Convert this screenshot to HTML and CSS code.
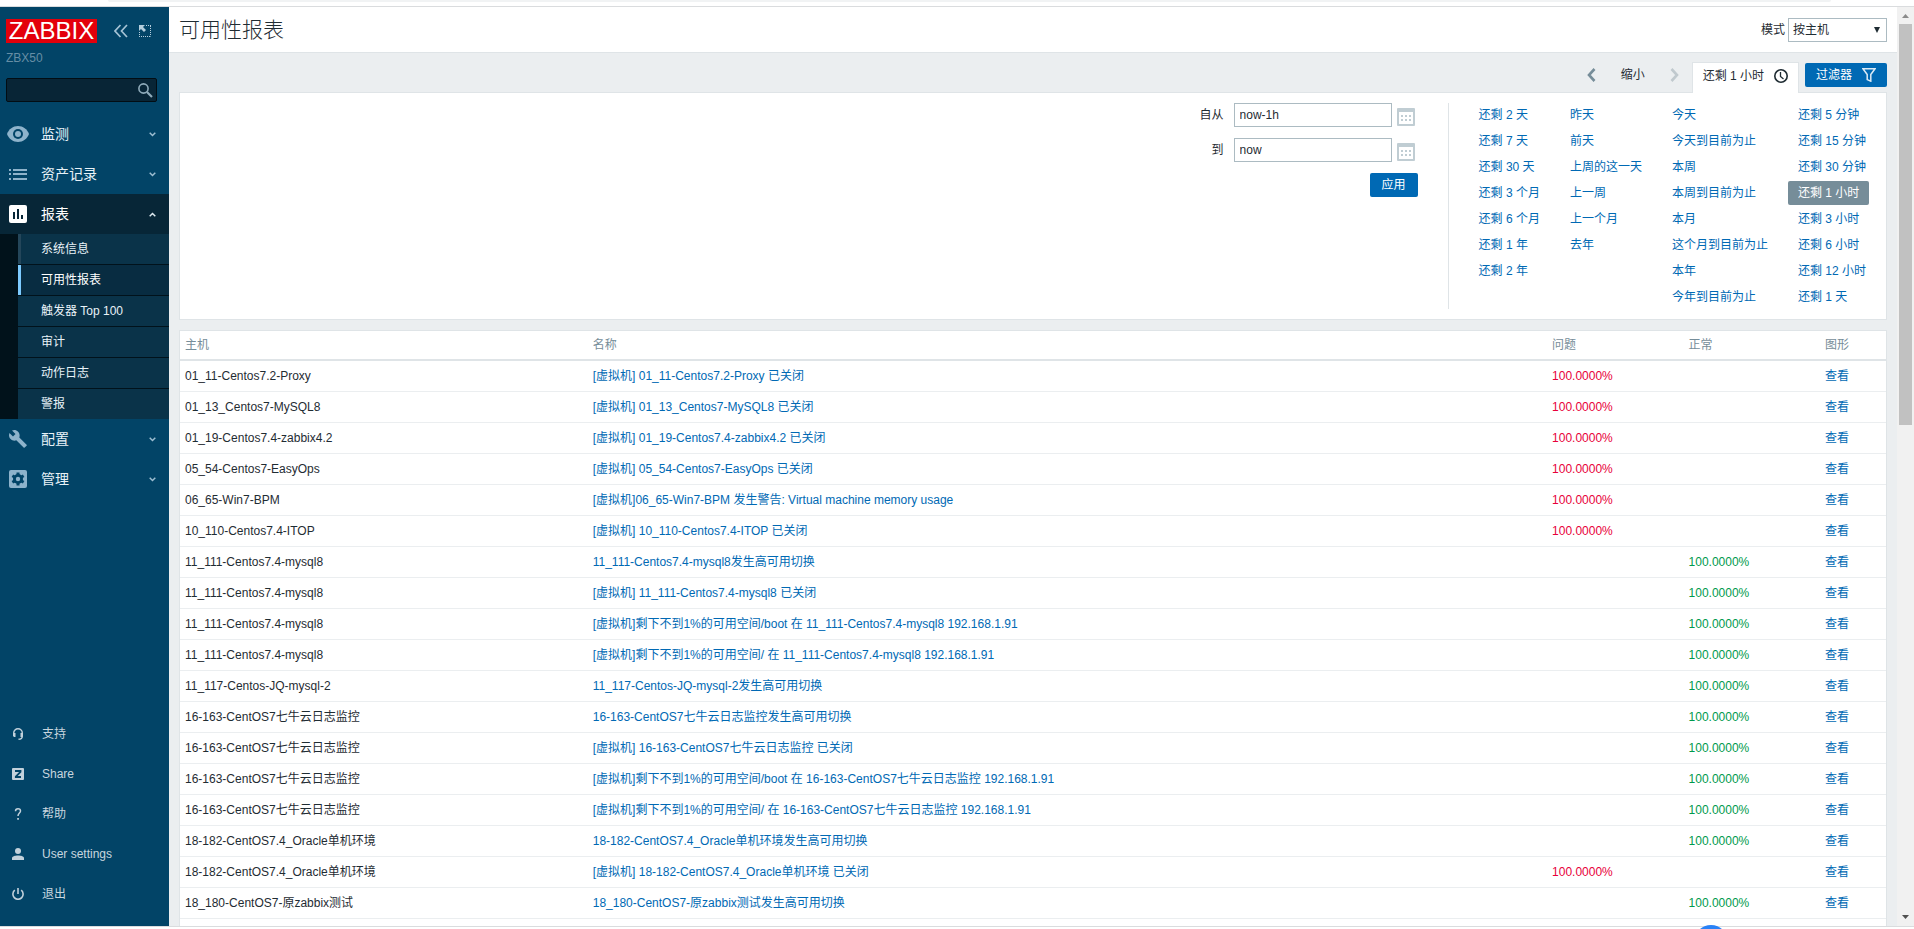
FILE: index.html
```
<!DOCTYPE html>
<html lang="zh-CN">
<head>
<meta charset="utf-8">
<title>可用性报表</title>
<link rel="stylesheet" href="styles.css">
</head>
<body>
<div class="chrome-top"></div>
<div class="app">
  <aside class="sidebar">
    <div class="sidebar-head">
      <a class="logo" href="#">ZABBIX</a>
      <button class="icon-btn" aria-label="收起侧边栏"><svg width="14" height="14" viewBox="0 0 14 14"><path d="M6.500 1L1 7l5.500 6M13 1L7.500 7l5.500 6" fill="none" stroke="#a5c3d5" stroke-width="1.700"/></svg></button>
      <button class="icon-btn compact" aria-label="隐藏侧边栏"><svg width="12" height="12" viewBox="0 0 12 12"><path d="M0 0h6L4 2l3 3-2 2-3-3-2 2z" fill="#b5cedd"/><path d="M7 .5h5M11.500 1v10.500M0 11.500h12M.5 7v5" fill="none" stroke="#b5cedd" stroke-dasharray="1 1"/></svg></button>
    </div>
    <div class="server-name">ZBX50</div>
    <form class="search">
      <input class="search-input" type="text" aria-label="搜索">
      <button class="search-btn" type="button" aria-label="搜索"><svg width="15" height="15" viewBox="0 0 15 15" fill="none" stroke="#8fabba"><circle cx="5.500" cy="5.500" r="4.600" stroke-width="1.600"/><path d="M9 9l5 5" stroke-width="2.200"/></svg></button>
    </form>
    <nav class="menu">
      <a class="menu-item" href="#"><svg class="menu-icon" width="22" height="16" viewBox="0 0 22 16"><path d="M11 0C6 0 1.800 3.200 0 8c1.800 4.800 6 8 11 8s9.200-3.200 11-8C20.200 3.200 16 0 11 0z" fill="#8eb3cb"/><circle cx="11" cy="8" r="5" fill="#024467"/><circle cx="11" cy="8" r="3" fill="#8eb3cb"/></svg><span class="menu-label">监测</span><svg class="chev" width="7" height="5" viewBox="0 0 7 5"><path d="M.7.8l2.800 2.700L6.300.8"/></svg></a>
      <a class="menu-item" href="#"><svg class="menu-icon" width="18" height="11" viewBox="0 0 18 11" fill="#8eb3cb"><path d="M0 0h2v2H0zM4 0h14v2H4zM0 4h2v2H0zM4 4h14v2H4zM0 9h2v2H0zM4 9h14v2H4z"/></svg><span class="menu-label">资产记录</span><svg class="chev" width="7" height="5" viewBox="0 0 7 5"><path d="M.7.8l2.800 2.700L6.300.8"/></svg></a>
      <a class="menu-item open" href="#"><svg class="menu-icon" width="18" height="18" viewBox="0 0 18 18"><rect width="18" height="18" rx="2" fill="#fff"/><path d="M4 7h2v7H4zM8 4h2v10H8zM12 10h2v4h-2z" fill="#072637"/></svg><span class="menu-label">报表</span><svg class="chev" width="7" height="5" viewBox="0 0 7 5"><path d="M.7 4.200l2.800-2.700 2.800 2.700"/></svg></a>
      <div class="submenu">
        <a class="sub-item" href="#">系统信息</a>
        <a class="sub-item current" href="#">可用性报表</a>
        <a class="sub-item" href="#">触发器 Top 100</a>
        <a class="sub-item" href="#">审计</a>
        <a class="sub-item" href="#">动作日志</a>
        <a class="sub-item" href="#">警报</a>
      </div>
      <a class="menu-item" href="#"><svg class="menu-icon" width="18" height="18" viewBox="0 0 18 18"><path d="M17.600 14.700L10.300 7.400C11 5.500 10.600 3.300 9.100 1.700 7.400 0 5 -.3 3 .6l3.500 3.500L4 6.500.5 3C-.4 5-.1 7.500 1.600 9.100c1.500 1.500 3.800 2 5.700 1.200l7.300 7.300c.3.300.8.300 1.100 0l1.900-1.800c.3-.3.300-.8 0-1.100z" fill="#8eb3cb"/></svg><span class="menu-label">配置</span><svg class="chev" width="7" height="5" viewBox="0 0 7 5"><path d="M.7.8l2.800 2.700L6.300.8"/></svg></a>
      <a class="menu-item" href="#"><svg class="menu-icon" width="18" height="18" viewBox="0 0 18 18"><rect width="18" height="18" rx="2" fill="#8eb3cb"/><g fill="#024467"><circle cx="9" cy="9" r="5"/><path d="M7.500 2.500h3v13h-3z"/><path d="M7.500 2.500h3v13h-3z" transform="rotate(60 9 9)"/><path d="M7.500 2.500h3v13h-3z" transform="rotate(120 9 9)"/></g><circle cx="9" cy="9" r="2.200" fill="#8eb3cb"/></svg><span class="menu-label">管理</span><svg class="chev" width="7" height="5" viewBox="0 0 7 5"><path d="M.7.8l2.800 2.700L6.300.8"/></svg></a>
    </nav>
    <nav class="user-menu">
      <a class="user-item" href="#"><svg class="menu-icon" width="12" height="12" viewBox="0 0 12 12"><path d="M1.700 7V5a4.300 4.300 0 0 1 8.600 0v3c0 2-1.200 3.300-3.800 3.300" fill="none" stroke="#c2d1db" stroke-width="1.400"/><path d="M1 5h2.500v4H2L1 8zM11 5H8.500v4H10l1-1z" fill="#c2d1db"/></svg>支持</a>
      <a class="user-item" href="#"><svg class="menu-icon" width="12" height="12" viewBox="0 0 12 12"><rect width="12" height="12" rx="1" fill="#c2d1db"/><path d="M3 3h5.500v.8L3.800 8.500V9H9" fill="none" stroke="#024467" stroke-width="1.800"/></svg>Share</a>
      <a class="user-item" href="#"><svg class="menu-icon" width="12" height="12" viewBox="0 0 12 12"><path d="M3.500 3.200C3.500 1.600 4.500.8 6 .8s2.500.8 2.500 2.200C8.500 5 6 5 6 8" fill="none" stroke="#c2d1db" stroke-width="1.500"/><path d="M5.200 10h1.700v1.800H5.200z" fill="#c2d1db"/></svg>帮助</a>
      <a class="user-item" href="#"><svg class="menu-icon" width="12" height="12" viewBox="0 0 12 12" fill="#c2d1db"><circle cx="6" cy="3" r="3"/><path d="M0 12v-2c0-1.600 3-2.500 6-2.500s6 .9 6 2.500v2z"/></svg>User settings</a>
      <a class="user-item" href="#"><svg class="menu-icon" width="12" height="12" viewBox="0 0 12 12" fill="none" stroke="#c2d1db" stroke-width="1.600"><path d="M6 0v6M2.800 2.200a5.100 5.100 0 1 0 6.400 0"/></svg>退出</a>
    </nav>
  </aside>
  <main class="main">
    <header class="page-head">
      <h1 class="page-title">可用性报表</h1>
      <label class="mode-label" for="mode">模式</label>
      <span class="select-wrap"><select class="mode-select" id="mode"><option>按主机</option></select><svg class="select-arrow" width="6" height="6" viewBox="0 0 6 6"><path d="M0 0h6L3 6z" fill="#1f2c33"/></svg></span>
    </header>
    <div class="tabs">
      <button class="nav-btn" aria-label="上一个"><svg width="9" height="14" viewBox="0 0 9 14"><path d="M7.500 1L2 7l5.500 6" fill="none" stroke="#768d99" stroke-width="2.600"/></svg></button>
      <button class="zoom-btn">缩小</button>
      <button class="nav-btn" aria-label="下一个" disabled><svg width="9" height="14" viewBox="0 0 9 14"><path d="M1.500 1L7 7l-5.500 6" fill="none" stroke="#c0c9ce" stroke-width="2.600"/></svg></button>
      <a class="time-tab" href="#">还剩 1 小时<svg width="14" height="14" viewBox="0 0 14 14" fill="none" stroke="#1f2c33"><circle cx="7" cy="7" r="6.200" stroke-width="1.600"/><path d="M6.500 3v4.500l3 2.500" stroke-width="1.300"/></svg></a>
      <button class="btn filter-btn">过滤器<svg width="14" height="14" viewBox="0 0 14 14"><path d="M1 .8h12L8.800 6.500v6.700l-3.600-1.600V6.500z" fill="none" stroke="#dbeaf5" stroke-width="1.500"/></svg></button>
    </div>
    <section class="filter">
      <form class="range">
        <label class="range-label" for="from">自从</label>
        <input class="range-input" id="from" type="text" value="now-1h">
        <button class="cal-btn" type="button" aria-label="选择开始日期"><svg width="18" height="18" viewBox="0 0 18 18"><rect width="18" height="18" rx="1" fill="#c0cdd3"/><path d="M2 4h14v12H2z" fill="#fff"/><path d="M4 7h2v2H4zM8 7h2v2H8zM12 7h2v2h-2zM4 11h2v2H4zM8 11h2v2H8zM12 11h2v2h-2z" fill="#c0cdd3"/></svg></button>
        <label class="range-label" for="to">到</label>
        <input class="range-input" id="to" type="text" value="now">
        <button class="cal-btn" type="button" aria-label="选择结束日期"><svg width="18" height="18" viewBox="0 0 18 18"><rect width="18" height="18" rx="1" fill="#c0cdd3"/><path d="M2 4h14v12H2z" fill="#fff"/><path d="M4 7h2v2H4zM8 7h2v2H8zM12 7h2v2h-2zM4 11h2v2H4zM8 11h2v2H8zM12 11h2v2h-2z" fill="#c0cdd3"/></svg></button>
        <button class="btn apply-btn" type="button">应用</button>
      </form>
      <div class="quick">
        <div class="quick-col"><a href="#">还剩 2 天</a><a href="#">还剩 7 天</a><a href="#">还剩 30 天</a><a href="#">还剩 3 个月</a><a href="#">还剩 6 个月</a><a href="#">还剩 1 年</a><a href="#">还剩 2 年</a></div>
        <div class="quick-col"><a href="#">昨天</a><a href="#">前天</a><a href="#">上周的这一天</a><a href="#">上一周</a><a href="#">上一个月</a><a href="#">去年</a></div>
        <div class="quick-col"><a href="#">今天</a><a href="#">今天到目前为止</a><a href="#">本周</a><a href="#">本周到目前为止</a><a href="#">本月</a><a href="#">这个月到目前为止</a><a href="#">本年</a><a href="#">今年到目前为止</a></div>
        <div class="quick-col"><a href="#">还剩 5 分钟</a><a href="#">还剩 15 分钟</a><a href="#">还剩 30 分钟</a><a class="chosen" href="#">还剩 1 小时</a><a href="#">还剩 3 小时</a><a href="#">还剩 6 小时</a><a href="#">还剩 12 小时</a><a href="#">还剩 1 天</a></div>
      </div>
    </section>
    <section class="report">
      <table class="list">
        <colgroup><col class="c-host"><col class="c-name"><col class="c-pct"><col class="c-pct"><col class="c-graph"></colgroup>
        <thead><tr><th>主机</th><th>名称</th><th>问题</th><th>正常</th><th>图形</th></tr></thead>
        <tbody>
        <tr><td>01_11-Centos7.2-Proxy</td><td><a href="#">[虚拟机] 01_11-Centos7.2-Proxy 已关闭</a></td><td class="bad">100.0000%</td><td></td><td><a href="#">查看</a></td></tr>
        <tr><td>01_13_Centos7-MySQL8</td><td><a href="#">[虚拟机] 01_13_Centos7-MySQL8 已关闭</a></td><td class="bad">100.0000%</td><td></td><td><a href="#">查看</a></td></tr>
        <tr><td>01_19-Centos7.4-zabbix4.2</td><td><a href="#">[虚拟机] 01_19-Centos7.4-zabbix4.2 已关闭</a></td><td class="bad">100.0000%</td><td></td><td><a href="#">查看</a></td></tr>
        <tr><td>05_54-Centos7-EasyOps</td><td><a href="#">[虚拟机] 05_54-Centos7-EasyOps 已关闭</a></td><td class="bad">100.0000%</td><td></td><td><a href="#">查看</a></td></tr>
        <tr><td>06_65-Win7-BPM</td><td><a href="#">[虚拟机]06_65-Win7-BPM 发生警告: Virtual machine memory usage</a></td><td class="bad">100.0000%</td><td></td><td><a href="#">查看</a></td></tr>
        <tr><td>10_110-Centos7.4-ITOP</td><td><a href="#">[虚拟机] 10_110-Centos7.4-ITOP 已关闭</a></td><td class="bad">100.0000%</td><td></td><td><a href="#">查看</a></td></tr>
        <tr><td>11_111-Centos7.4-mysql8</td><td><a href="#">11_111-Centos7.4-mysql8发生高可用切换</a></td><td></td><td class="good">100.0000%</td><td><a href="#">查看</a></td></tr>
        <tr><td>11_111-Centos7.4-mysql8</td><td><a href="#">[虚拟机] 11_111-Centos7.4-mysql8 已关闭</a></td><td></td><td class="good">100.0000%</td><td><a href="#">查看</a></td></tr>
        <tr><td>11_111-Centos7.4-mysql8</td><td><a href="#">[虚拟机]剩下不到1%的可用空间/boot 在 11_111-Centos7.4-mysql8 192.168.1.91</a></td><td></td><td class="good">100.0000%</td><td><a href="#">查看</a></td></tr>
        <tr><td>11_111-Centos7.4-mysql8</td><td><a href="#">[虚拟机]剩下不到1%的可用空间/ 在 11_111-Centos7.4-mysql8 192.168.1.91</a></td><td></td><td class="good">100.0000%</td><td><a href="#">查看</a></td></tr>
        <tr><td>11_117-Centos-JQ-mysql-2</td><td><a href="#">11_117-Centos-JQ-mysql-2发生高可用切换</a></td><td></td><td class="good">100.0000%</td><td><a href="#">查看</a></td></tr>
        <tr><td>16-163-CentOS7七牛云日志监控</td><td><a href="#">16-163-CentOS7七牛云日志监控发生高可用切换</a></td><td></td><td class="good">100.0000%</td><td><a href="#">查看</a></td></tr>
        <tr><td>16-163-CentOS7七牛云日志监控</td><td><a href="#">[虚拟机] 16-163-CentOS7七牛云日志监控 已关闭</a></td><td></td><td class="good">100.0000%</td><td><a href="#">查看</a></td></tr>
        <tr><td>16-163-CentOS7七牛云日志监控</td><td><a href="#">[虚拟机]剩下不到1%的可用空间/boot 在 16-163-CentOS7七牛云日志监控 192.168.1.91</a></td><td></td><td class="good">100.0000%</td><td><a href="#">查看</a></td></tr>
        <tr><td>16-163-CentOS7七牛云日志监控</td><td><a href="#">[虚拟机]剩下不到1%的可用空间/ 在 16-163-CentOS7七牛云日志监控 192.168.1.91</a></td><td></td><td class="good">100.0000%</td><td><a href="#">查看</a></td></tr>
        <tr><td>18-182-CentOS7.4_Oracle单机环境</td><td><a href="#">18-182-CentOS7.4_Oracle单机环境发生高可用切换</a></td><td></td><td class="good">100.0000%</td><td><a href="#">查看</a></td></tr>
        <tr><td>18-182-CentOS7.4_Oracle单机环境</td><td><a href="#">[虚拟机] 18-182-CentOS7.4_Oracle单机环境 已关闭</a></td><td class="bad">100.0000%</td><td></td><td><a href="#">查看</a></td></tr>
        <tr><td>18_180-CentOS7-原zabbix测试</td><td><a href="#">18_180-CentOS7-原zabbix测试发生高可用切换</a></td><td></td><td class="good">100.0000%</td><td><a href="#">查看</a></td></tr>
        </tbody>
      </table>
    </section>
  </main>
  <div class="scrollbar">
    <svg width="7" height="4" viewBox="0 0 7 4"><path d="M0 4L3.500 0 7 4z" fill="#8b8b8b"/></svg>
    <div class="track"><div class="thumb"></div></div>
    <svg width="7" height="4" viewBox="0 0 7 4"><path d="M0 0h7L3.500 4z" fill="#505050"/></svg>
  </div>
</div>
<div class="chrome-bottom"><span class="bubble"></span></div>
</body>
</html>
```
FILE: styles.css
```
* { box-sizing: border-box; }
html, body { height: 100%; }
body {
  margin: 0;
  display: flex;
  flex-direction: column;
  overflow: hidden;
  background: #fff;
  color: #1f2c33;
  font: 12px/16px "Liberation Sans", "Noto Sans CJK SC", sans-serif;
}
a { color: #0069b4; text-decoration: none; }
button, input, select { font: inherit; color: inherit; margin: 0; }
button { border: 0; padding: 0; background: none; display: flex; align-items: center; }
svg { display: block; flex: none; }

.chrome-top { flex: none; height: 7px; border-bottom: 1px solid #dadcde; padding: 0 83px 0 108px; }
.chrome-top::before { content: ""; display: block; height: 2px; background: #f1f3f4; border-radius: 0 0 4px 4px; }
.chrome-bottom { flex: none; height: 3px; border-top: 1px solid #dadcde; position: relative; }
.bubble { position: absolute; top: -2px; right: 186px; width: 34px; height: 34px; border-radius: 50%; background: #2a82f7; }

.app { flex: 1; min-height: 0; display: flex; }

.sidebar { flex: none; width: 169px; background: #024467; display: flex; flex-direction: column; padding: 12px 0; }
.sidebar-head { display: flex; align-items: center; padding-left: 6px; }
.logo { width: 91px; height: 24px; background: #e3000b; color: #fff; font-size: 24px; line-height: 24px; text-align: center; margin-right: 17px; }
.compact { margin-left: 11px; }
.server-name { color: #668ea5; padding-left: 6px; margin: 7px 0 12px; }
.search { display: flex; align-items: center; height: 24px; margin: 0 12px 12px 6px; padding-right: 3px; background: #082536; border: 1px solid #020d14; border-radius: 2px; }
.search-input { flex: 1; min-width: 0; height: 22px; border: 0; padding: 0 4px; background: transparent; color: #fff; outline: 0; }
.menu-item { display: grid; grid-template-columns: 22px 1fr 7px; column-gap: 12px; align-items: center; height: 40px; padding: 0 13px 0 7px; color: #e8f2f8; font-size: 14px; line-height: 20px; }
.menu-icon { margin: 0 auto; }
.menu-item.open { background: #072637; color: #fff; }
.chev { fill: none; stroke: #9fbfd2; stroke-width: 1.500px; }
.open .chev { stroke: #dfeaf1; }
.submenu { display: flex; flex-direction: column; gap: 1px; padding-left: 18px; background: #01121b; }
.sub-item { height: 30px; line-height: 30px; padding-left: 20px; border-left: 3px solid #0a3349; background: #0a3349; color: #e8f2f8; }
.sub-item:first-child { border-left-color: #24465a; }
.sub-item.current { border-left-color: #7dcbff; background: #082c41; color: #fff; }
.user-menu { margin-top: auto; }
.user-item { display: grid; grid-template-columns: 22px 1fr; column-gap: 13px; align-items: center; height: 40px; padding-left: 7px; color: #c8d6df; }

.main { flex: 1; min-width: 0; display: flex; flex-direction: column; background: #ebeef0; overflow: hidden; }
.page-head { flex: none; height: 46px; display: flex; align-items: center; padding: 0 10px; border-bottom: 1px solid #dfe4e7; background: #fff; }
.page-title { margin: 0 auto 0 0; font-size: 21px; line-height: 28px; font-weight: 300; }
.mode-label { margin: 0 3px; }
.select-wrap { position: relative; }
.mode-select { display: block; width: 99px; height: 24px; padding: 0 20px 0 4px; appearance: none; border: 1px solid #acbbc2; border-radius: 0; background: #fff; }
.select-arrow { position: absolute; right: 7px; top: 9px; pointer-events: none; }

.tabs { flex: none; display: flex; align-items: center; justify-content: flex-end; padding: 9px 10px 0; height: 39px; }
.nav-btn { width: 9px; height: 24px; }
.zoom-btn { height: 24px; padding: 0 25px; }
.time-tab { display: flex; align-items: center; gap: 10px; height: 31px; padding: 0 10px 4px; margin: 0 6px -1px 13px; border: 1px solid #dfe4e7; border-bottom: 0; background: #fff; color: #1f2c33; z-index: 1; }
.tabs .btn, .tabs .nav-btn, .tabs .zoom-btn { margin-bottom: 5px; }
.btn { height: 24px; border-radius: 2px; background: #0069b4; color: #fff; justify-content: center; }
.filter-btn { gap: 10px; padding: 0 11px; }

.filter { flex: none; display: flex; justify-content: flex-end; margin: 0 10px 10px; padding: 10px; border: 1px solid #dfe4e7; background: #fff; }
.range { display: grid; grid-template-columns: auto 158px 21px; grid-auto-rows: 24px; row-gap: 11px; column-gap: 5px; align-items: center; align-content: start; margin-right: 30px; }
.range-label { text-align: right; margin-right: 5px; }
.range-input { width: 100%; height: 24px; padding: 0 5px; border: 1px solid #acbbc2; border-radius: 0; background: #fff; }
.cal-btn { height: 20px; align-self: end; }
.apply-btn { grid-column: 1 / -1; justify-self: end; width: 48px; }
.quick { display: flex; gap: 10px; padding-left: 20px; border-left: 1px solid #dfe4e7; }
.quick-col { display: flex; flex-direction: column; align-items: flex-start; gap: 2px; }
.quick-col a { height: 24px; line-height: 24px; padding: 0 10px; border-radius: 2px; white-space: nowrap; }
.quick-col .chosen { background: #768d99; color: #fff; }

.report { flex: 1; min-height: 0; overflow: hidden; margin: 0 10px; border: 1px solid #dfe4e7; border-bottom: 0; background: #fff; }
.list { width: 100%; table-layout: fixed; border-collapse: separate; border-spacing: 0; }
.c-host { width: 23.9%; }
.c-pct { width: 8%; }
.c-graph { width: 66px; }
.list th { height: 30px; padding: 0 5px; text-align: left; font-weight: 400; color: #768d99; border-bottom: 2px solid #dfe4e7; }
.list td { height: 31px; padding: 0 5px; border-bottom: 1px solid #ebeef0; white-space: nowrap; }
.list .bad { color: #e8003a; }
.list .good { color: #009a4d; }

.scrollbar { flex: none; width: 17px; display: flex; flex-direction: column; align-items: center; padding: 7px 0; background: #f1f1f1; }
.track { flex: 1; align-self: stretch; margin: 6px 2px; }
.thumb { height: 45.300%; background: #c1c1c1; }
```
